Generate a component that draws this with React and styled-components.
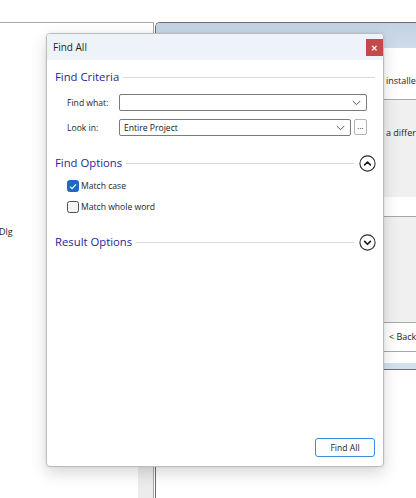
import React from 'react';
import styled, { createGlobalStyle } from 'styled-components';

const GlobalStyle = createGlobalStyle`
  html, body {
    margin: 0;
    padding: 0;
    background: #fff;
  }
  body {
    font-family: "Segoe UI", "Open Sans", "Noto Sans", sans-serif;
    color: #1e1e1e;
  }
`;

function CircleChevron({ up }) {
  return (
    <svg width="17" height="17" viewBox="0 0 17 17">
      <circle cx="8.5" cy="8.5" r="7.6" fill="#fff" stroke="#2b2b2b" strokeWidth="1.1" />
      <path
        d={up ? 'M5.6 9.9 L8.5 7 L11.4 9.9' : 'M5.6 7.4 L8.5 10.3 L11.4 7.4'}
        fill="none"
        stroke="#1a1a1a"
        strokeWidth="1.6"
        strokeLinecap="round"
        strokeLinejoin="round"
      />
    </svg>
  );
}

function DropArrow() {
  return (
    <svg width="9" height="6" viewBox="0 0 9 6">
      <path d="M0.8 1 L4.5 4.7 L8.2 1" fill="none" stroke="#5a5a5a" strokeWidth="1" />
    </svg>
  );
}

function Check({ checked, label }) {
  return (
    <CheckRow>
      <Box checked={checked}>
        {checked && (
          <svg width="8" height="7" viewBox="0 0 8 7">
            <path d="M1 3.6 L3.1 5.6 L7 1.3" fill="none" stroke="#fff" strokeWidth="1.1" />
          </svg>
        )}
      </Box>
      <CheckLabel>{label}</CheckLabel>
    </CheckRow>
  );
}

function Section({ title, toggle }) {
  return (
    <SectionHeader>
      <Heading>{title}</Heading>
      <Rule />
      {toggle && <CircleChevron up={toggle === 'up'} />}
    </SectionHeader>
  );
}

export default function App() {
  return (
    <>
      <GlobalStyle />
      <Desktop>
        <LeftPane>
          <LeftContent>
            <Crumb>Dlg</Crumb>
          </LeftContent>
          <ScrollTrack />
        </LeftPane>

        <RightWindow>
          <WinTitle />
          <Band tone="white" h={51} line>
            <BandText>installed</BandText>
          </Band>
          <Band tone="gray" h={97}>
            <BandText>a differe</BandText>
          </Band>
          <Band tone="white" h={19} line />
          <Band tone="gray" h={105} line />
          <Band tone="white" h={28} line>
            <BackText>&lt; Back</BackText>
          </Band>
          <Band tone="white" h={11} />
          <Band tone="blue" h={6} dark />
        </RightWindow>

        <Dialog>
          <TitleBar>
            <Title>Find All</Title>
            <CloseBtn>✕</CloseBtn>
          </TitleBar>
          <Body>
            <Section title="Find Criteria" />
            <FieldGrid>
              <FieldLabel>Find what:</FieldLabel>
              <Combo>
                <span />
                <DropArrow />
              </Combo>
              <FieldLabel>Look in:</FieldLabel>
              <LookRow>
                <Combo>
                  <ComboText>Entire Project</ComboText>
                  <DropArrow />
                </Combo>
                <Ellipsis>...</Ellipsis>
              </LookRow>
            </FieldGrid>

            <Spaced top={18}>
              <Section title="Find Options" toggle="up" />
            </Spaced>
            <CheckList>
              <Check checked label="Match case" />
              <Check label="Match whole word" />
            </CheckList>

            <Spaced top={20}>
              <Section title="Result Options" toggle="down" />
            </Spaced>

            <Footer>
              <PrimaryButton>Find All</PrimaryButton>
            </Footer>
          </Body>
        </Dialog>
      </Desktop>
    </>
  );
}

const Desktop = styled.div`
  position: relative;
  width: 416px;
  height: 498px;
  overflow: hidden;
  background: #fff;
`;

const LeftPane = styled.div`
  position: absolute;
  left: 0;
  top: 22px;
  width: 154px;
  bottom: 0;
  box-sizing: border-box;
  border-top: 1px solid #a9a9a9;
  border-right: 1px solid #a9a9a9;
  display: flex;
`;

const LeftContent = styled.div`
  flex: 1;
  padding-top: 203px;
`;

const Crumb = styled.div`
  font-size: 9px;
  line-height: 12px;
  margin-left: -1px;
  color: #1e1e1e;
`;

const ScrollTrack = styled.div`
  width: 15px;
  margin-top: 30px;
  background: #ececec;
`;

const RightWindow = styled.div`
  position: absolute;
  left: 155px;
  top: 22px;
  right: -20px;
  bottom: 0;
  border-left: 1px solid #6d6d6d;
  border-top: 1px solid #6d6d6d;
  border-top-left-radius: 5px;
  overflow: hidden;
  display: flex;
  flex-direction: column;
`;

const WinTitle = styled.div`
  height: 25px;
  flex-shrink: 0;
  background: linear-gradient(#c2d1e1, #d0dcea);
`;

const Band = styled.div`
  height: ${p => p.h}px;
  flex-shrink: 0;
  box-sizing: content-box;
  background: ${p => (p.tone === 'gray' ? '#f0f0f0' : p.tone === 'blue' ? '#d3e1ef' : '#fff')};
  border-bottom: ${p => (p.dark ? '1px solid #6f6f6f' : p.line ? '1px solid #a8a8a8' : 'none')};
  padding-left: 230px;
`;

const BandText = styled.div`
  padding-top: 27px;
  font-size: 9px;
  line-height: 12px;
  white-space: nowrap;
`;

const BackText = styled.div`
  padding: 8px 0 0 3px;
  font-size: 9px;
  line-height: 12px;
  white-space: nowrap;
`;

const Dialog = styled.div`
  position: absolute;
  left: 46px;
  top: 33px;
  width: 338px;
  height: 434px;
  box-sizing: border-box;
  background: #fff;
  border: 1px solid #bcbcbc;
  border-radius: 4px;
  box-shadow: 0 6px 16px rgba(0, 0, 0, 0.16), 0 0 3px rgba(0, 0, 0, 0.08);
  display: flex;
  flex-direction: column;
  overflow: hidden;
`;

const TitleBar = styled.div`
  height: 26px;
  flex-shrink: 0;
  background: #eef3f9;
  display: flex;
  align-items: flex-start;
  justify-content: space-between;
  padding-left: 6px;
`;

const Title = styled.div`
  font-size: 10px;
  line-height: 26px;
  color: #1e1e1e;
`;

const CloseBtn = styled.div`
  width: 17px;
  height: 17px;
  margin-top: 5px;
  background: #c8474a;
  color: #fff;
  font-size: 8px;
  font-weight: bold;
  display: flex;
  align-items: center;
  justify-content: center;
`;

const Body = styled.div`
  flex: 1;
  display: flex;
  flex-direction: column;
  padding: 8px 7px 9px 8px;
`;

const SectionHeader = styled.div`
  display: flex;
  align-items: center;
  gap: 4px;
  min-height: 18px;
`;

const Heading = styled.div`
  font-size: 11.3px;
  line-height: 16px;
  color: #26269a;
  white-space: nowrap;
`;

const Rule = styled.div`
  flex: 1;
  height: 1px;
  background: #d9d9d9;
  margin-right: 1px;
`;

const FieldGrid = styled.div`
  display: grid;
  grid-template-columns: 52px 1fr;
  row-gap: 8px;
  align-items: center;
  margin-top: 8px;
  padding: 0 9px 0 12px;
`;

const FieldLabel = styled.div`
  font-size: 8.6px;
  color: #1e1e1e;
`;

const LookRow = styled.div`
  display: flex;
  gap: 3px;
`;

const Combo = styled.div`
  flex: 1;
  height: 17px;
  box-sizing: border-box;
  border: 1px solid #7b7b7b;
  border-radius: 2px;
  display: flex;
  align-items: center;
  justify-content: space-between;
  padding: 0 5px 0 4px;
`;

const ComboText = styled.span`
  font-size: 8.6px;
  color: #111;
`;

const Ellipsis = styled.div`
  width: 13px;
  height: 16px;
  box-sizing: border-box;
  border: 1px solid #b3b3b3;
  border-radius: 2px;
  background: #fdfdfd;
  font-size: 8px;
  line-height: 12px;
  text-align: center;
  color: #222;
`;

const Spaced = styled.div`
  margin-top: ${p => p.top}px;
`;

const CheckList = styled.div`
  display: flex;
  flex-direction: column;
  gap: 9px;
  margin-top: 8px;
  padding-left: 12px;
`;

const CheckRow = styled.div`
  display: flex;
  align-items: center;
  gap: 2px;
`;

const Box = styled.div`
  width: 12px;
  height: 12px;
  box-sizing: border-box;
  border-radius: 2.5px;
  border: 1px solid ${p => (p.checked ? '#1b6bc6' : '#4d4d4d')};
  background: ${p => (p.checked ? '#1b6bc6' : '#f4f4f4')};
  display: flex;
  align-items: center;
  justify-content: center;
`;

const CheckLabel = styled.div`
  font-size: 8.6px;
  line-height: 12px;
  color: #1e1e1e;
`;

const Footer = styled.div`
  margin-top: auto;
  display: flex;
  justify-content: flex-end;
  padding-right: 1px;
`;

const PrimaryButton = styled.button`
  width: 60px;
  height: 19px;
  box-sizing: border-box;
  border: 1px solid #3a8ddc;
  border-radius: 3px;
  background: #fdfdfd;
  font-family: inherit;
  font-size: 8.6px;
  color: #1e1e1e;
  padding: 0;
`;
